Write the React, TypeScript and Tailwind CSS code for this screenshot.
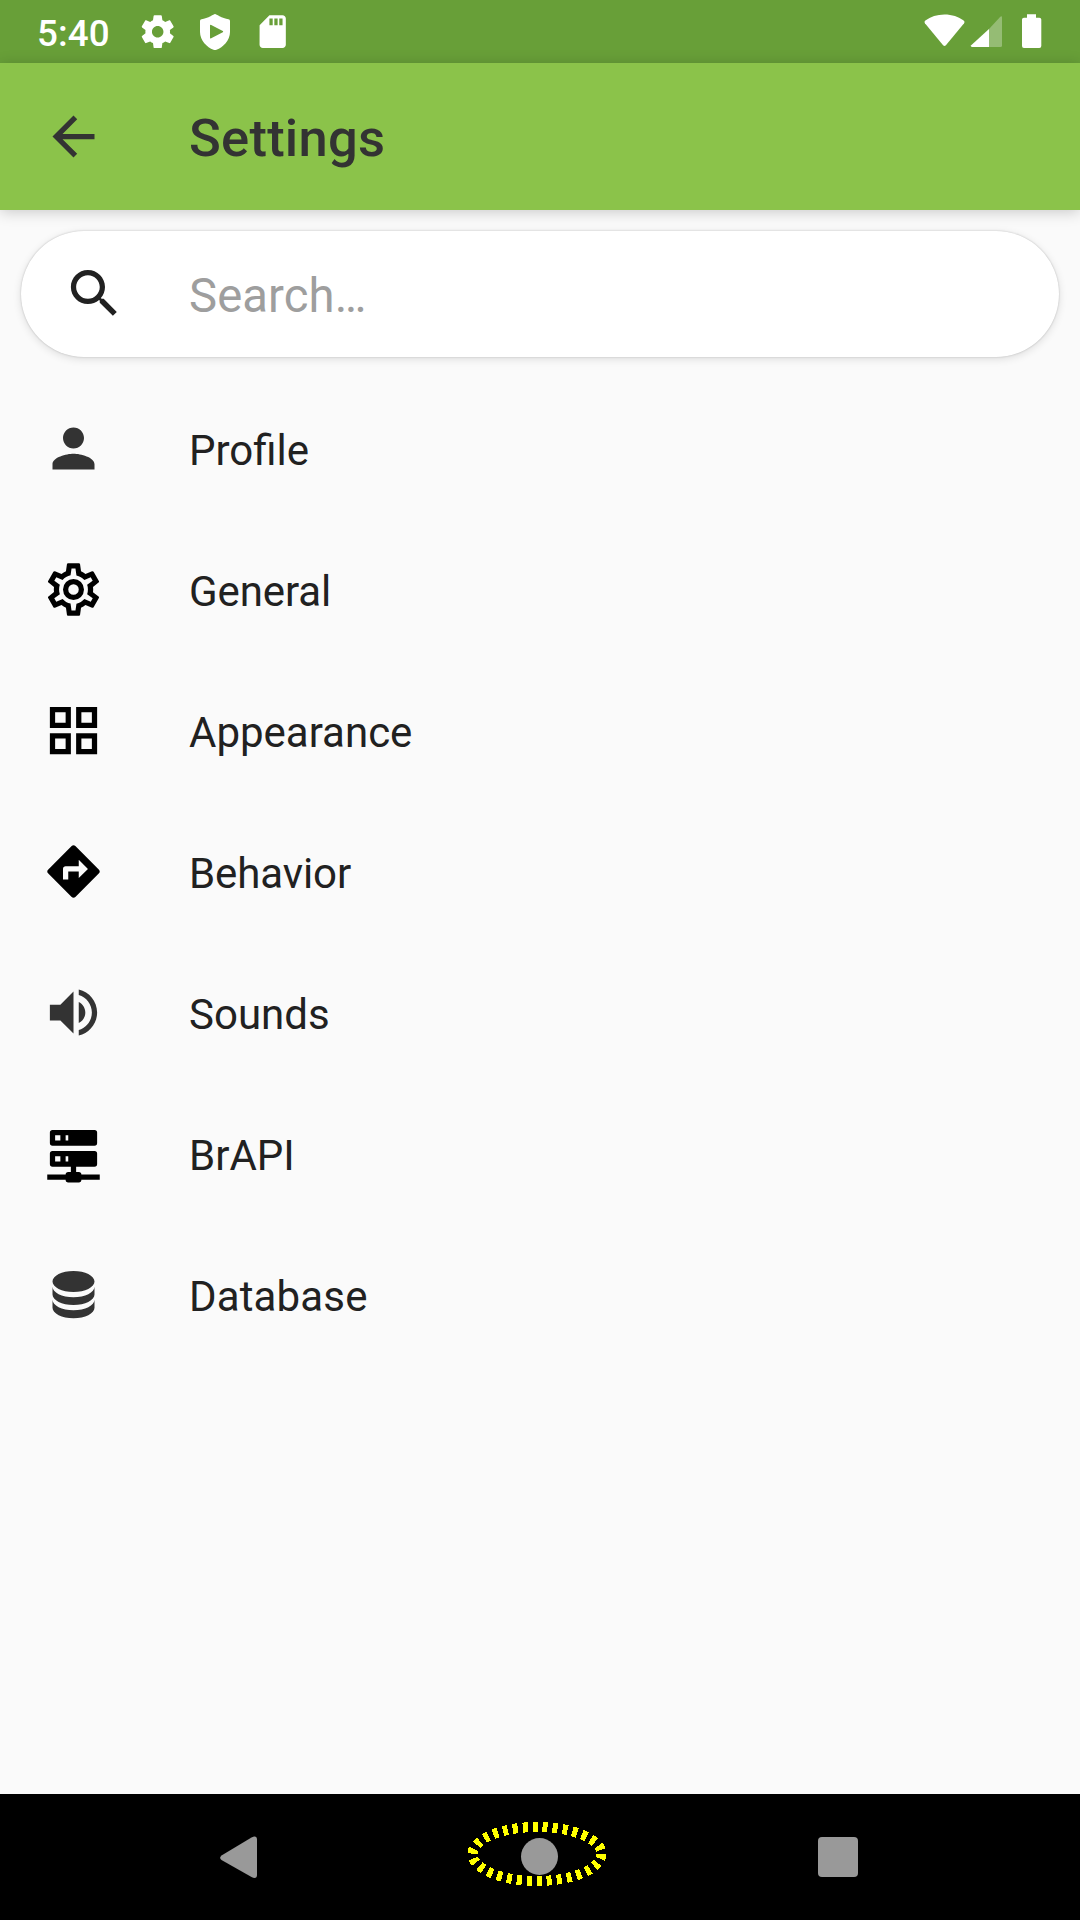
import React from "react";

type IconProps = { d: string; className?: string };

function Icon({ d, className }: IconProps) {
  return (
    <svg viewBox="0 0 24 24" fill="currentColor" fillRule="evenodd" className={className}>
      <path d={d} />
    </svg>
  );
}

const paths = {
  back: "M20 11H7.83l5.59-5.59L12 4l-8 8 8 8 1.41-1.41L7.83 13H20v-2z",
  search:
    "M15.5 14h-.79l-.28-.27C15.41 12.59 16 11.11 16 9.5 16 5.91 13.09 3 9.5 3S3 5.91 3 9.5 5.91 16 9.5 16c1.61 0 3.09-.59 4.23-1.57l.27.28v.79l5 4.99L20.49 19l-4.99-5zm-6 0C7.01 14 5 11.99 5 9.5S7.01 5 9.5 5 14 7.01 14 9.5 11.99 14 9.5 14z",
  person:
    "M12 12c2.21 0 4-1.79 4-4s-1.79-4-4-4-4 1.79-4 4 1.79 4 4 4zm0 2c-2.67 0-8 1.34-8 4v2h16v-2c0-2.66-5.33-4-8-4z",
  cogOutline:
    "M12,8A4,4 0 0,1 16,12A4,4 0 0,1 12,16A4,4 0 0,1 8,12A4,4 0 0,1 12,8M12,10A2,2 0 0,0 10,12A2,2 0 0,0 12,14A2,2 0 0,0 14,12A2,2 0 0,0 12,10M10,22C9.75,22 9.54,21.82 9.5,21.58L9.13,18.93C8.5,18.68 7.96,18.34 7.44,17.94L4.95,18.95C4.73,19.03 4.46,18.95 4.34,18.73L2.34,15.27C2.21,15.05 2.27,14.78 2.46,14.63L4.57,12.97L4.5,12L4.57,11L2.46,9.37C2.27,9.22 2.21,8.95 2.34,8.73L4.34,5.27C4.46,5.05 4.73,4.96 4.95,5.05L7.44,6.05C7.96,5.66 8.5,5.32 9.13,5.07L9.5,2.42C9.54,2.18 9.75,2 10,2H14C14.25,2 14.46,2.18 14.5,2.42L14.87,5.07C15.5,5.32 16.04,5.66 16.56,6.05L19.05,5.05C19.27,4.96 19.54,5.05 19.66,5.27L21.66,8.73C21.79,8.95 21.73,9.22 21.54,9.37L19.43,11L19.5,12L19.43,13L21.54,14.63C21.73,14.78 21.79,15.05 21.66,15.27L19.66,18.73C19.54,18.95 19.27,19.04 19.05,18.95L16.56,17.95C16.04,18.34 15.5,18.68 14.87,18.93L14.5,21.58C14.46,21.82 14.25,22 14,22H10M11.25,4L10.88,6.61C9.68,6.86 8.62,7.5 7.85,8.39L5.44,7.35L4.69,8.65L6.8,10.2C6.4,11.37 6.4,12.64 6.8,13.8L4.68,15.36L5.43,16.66L7.86,15.62C8.63,16.5 9.68,17.14 10.87,17.38L11.24,20H12.76L13.13,17.39C14.32,17.14 15.37,16.5 16.14,15.62L18.57,16.66L19.32,15.36L17.2,13.81C17.6,12.64 17.6,11.37 17.2,10.2L19.31,8.65L18.56,7.35L16.15,8.39C15.38,7.5 14.32,6.86 13.12,6.62L12.75,4H11.25Z",
  grid: "M3 3h8v8H3zM5 5v4h4V5zM13 3h8v8h-8zM15 5v4h4V5zM3 13h8v8H3zM5 15v4h4v-4zM13 13h8v8h-8zM15 15v4h4v-4z",
  directions:
    "M21.71 11.29l-9-9c-.39-.39-1.02-.39-1.41 0l-9 9c-.39.39-.39 1.02 0 1.41l9 9c.39.39 1.02.39 1.41 0l9-9c.39-.38.39-1.01 0-1.41zM14 14.5V12h-4v3H8v-4c0-.55.45-1 1-1h5V7.5l3.5 3.5-3.5 3.5z",
  volume:
    "M3 9v6h4l5 5V4L7 9H3zM16.5 12c0-1.77-1.02-3.29-2.5-4.03v8.05c1.48-.73 2.5-2.25 2.5-4.02zM14 3.23v2.06c2.89.86 5 3.54 5 6.71s-2.11 5.85-5 6.71v2.06c4.01-.91 7-4.49 7-8.77s-2.99-7.86-7-8.77z",
  server:
    "M13,19H14A1,1 0 0,1 15,20H22V22H15A1,1 0 0,1 14,23H10A1,1 0 0,1 9,22H2V20H9A1,1 0 0,1 10,19H11V17H4A1,1 0 0,1 3,16V12A1,1 0 0,1 4,11H20A1,1 0 0,1 21,12V16A1,1 0 0,1 20,17H13V19M4,3H20A1,1 0 0,1 21,4V8A1,1 0 0,1 20,9H4A1,1 0 0,1 3,8V4A1,1 0 0,1 4,3M9,7H10V5H9V7M9,15H10V13H9V15M5,5V7H7V5H5M5,13V15H7V13H5Z",
  database:
    "M12,3C7.58,3 4,4.79 4,7C4,9.21 7.58,11 12,11C16.42,11 20,9.21 20,7C20,4.79 16.42,3 12,3M4,9V12C4,14.21 7.58,16 12,16C16.42,16 20,14.21 20,12V9C20,11.21 16.42,13 12,13C7.58,13 4,11.21 4,9M4,14V17C4,19.21 7.58,21 12,21C16.42,21 20,19.21 20,17V14C20,16.21 16.42,18 12,18C7.58,18 4,16.21 4,14Z",
  settings:
    "M19.43 12.98c.04-.32.07-.64.07-.98s-.03-.66-.07-.98l2.11-1.65c.19-.15.24-.42.12-.64l-2-3.46c-.12-.22-.39-.3-.61-.22l-2.49 1c-.52-.4-1.08-.73-1.69-.98l-.38-2.65C14.46 2.18 14.25 2 14 2h-4c-.25 0-.46.18-.49.42l-.38 2.65c-.61.25-1.17.59-1.69.98l-2.49-1c-.23-.09-.49 0-.61.22l-2 3.46c-.13.22-.07.49.12.64l2.11 1.65c-.04.32-.07.65-.07.98s.03.66.07.98l-2.11 1.65c-.19.15-.24.42-.12.64l2 3.46c.12.22.39.3.61.22l2.49-1c.52.4 1.08.73 1.69.98l.38 2.65c.03.24.24.42.49.42h4c.25 0 .46-.18.49-.42l.38-2.65c.61-.25 1.17-.59 1.69-.98l2.49 1c.23.09.49 0 .61-.22l2-3.46c.12-.22.07-.49-.12-.64l-2.11-1.65zM12 15.5c-1.93 0-3.5-1.57-3.5-3.5s1.57-3.5 3.5-3.5 3.5 1.57 3.5 3.5-1.57 3.5-3.5 3.5z",
  sdCard:
    "M18 2h-8L4.02 8 4 20c0 1.1.9 2 2 2h12c1.1 0 2-.9 2-2V4c0-1.1-.9-2-2-2zm-6 6h-2V4h2v4zm3 0h-2V4h2v4zm3 0h-2V4h2v4z",
};

const items = [
  { label: "Profile", d: paths.person, color: "text-[#333333]", tracking: "tracking-normal" },
  { label: "General", d: paths.cogOutline, color: "text-black", tracking: "tracking-[-0.1px]" },
  { label: "Appearance", d: paths.grid, color: "text-black", tracking: "tracking-normal" },
  { label: "Behavior", d: paths.directions, color: "text-black", tracking: "tracking-[-0.1px]" },
  { label: "Sounds", d: paths.volume, color: "text-[#333333]", tracking: "tracking-normal" },
  { label: "BrAPI", d: paths.server, color: "text-black", tracking: "tracking-normal" },
  { label: "Database", d: paths.database, color: "text-[#333333]", tracking: "tracking-[0.15px]" },
];

function StatusBar() {
  return (
    <div className="flex h-[63px] shrink-0 items-center bg-[#689f38] pl-[37px] pr-[32px] text-white">
      <span className="w-[100.5px] pt-[5px] text-[36.75px] leading-none font-medium tracking-[0.1px]">5:40</span>
      <Icon d={paths.settings} className="size-[39.4px]" />
      <svg viewBox="0 0 32 38" className="ml-[22px] h-[38px] w-[32px]" fill="currentColor" fillRule="evenodd">
        <path d="M16 1C17 1 18 2 20.500 3.200C23 4.500 26.500 5.800 29.500 6.300Q31 6.600 31 8V19C31 27.500 24 34.500 17.500 36.700Q16 37.200 14.500 36.700C8 34.500 1 27.500 1 19V8Q1 6.600 2.500 6.300C5.500 5.800 9 4.500 11.500 3.200C14 2 15 1 16 1ZM11 12.500V24.500Q11 25.800 12.200 25.200L23.800 19.300Q24.700 18.700 23.800 18.100L12.200 11.900Q11 11.300 11 12.500Z" />
      </svg>
      <Icon d={paths.sdCard} className="ml-[22.3px] size-[39.4px]" />
      <svg viewBox="0 0 124 40" className="ml-auto h-[40px] w-[124px]" fill="currentColor">
        <path d="M.9 11.200Q-.1 9.800 1.400 8.500C6.500 4.700 13 2.500 20.500 2.500S34.500 4.700 39.600 8.500Q41.100 9.800 40.100 11.200L21.900 33.300Q20.500 34.800 19.100 33.300Z" />
        <path d="M65 17V35H47.800Q46.200 34.500 47.200 33.200Z" />
        <path d="M65 17 76.300 4.700Q78 3.500 78 5.300V33.500Q78 35 76.500 35H65Z" className="opacity-30" />
        <path d="M103 2.300H112V5.800H115.300Q117.300 5.800 117.300 7.500V34Q117.300 36 115.300 36H100Q98 36 98 34V7.500Q98 5.800 100 5.800H103Z" />
      </svg>
    </div>
  );
}

function NavBar() {
  return (
    <div className="flex h-[126px] shrink-0 items-center bg-black pb-px pl-[219px] text-[#999999]">
      <svg viewBox="0 0 39 44" className="h-[44px] w-[39px]" fill="currentColor">
        <path d="M2.500 20.500 32.500 2.400C36 .6 38 1.500 38 4.500V40C38 43 36 43.900 32.500 42.100L2.500 25.100Q-.2 22.800 2.500 20.500Z" />
      </svg>
      <div className="relative ml-[263px] size-[37px] rounded-full bg-[#999999]">
        <svg
          viewBox="0 0 142 68"
          className="absolute -top-[18px] -left-[55.5px] h-[68px] w-[142px] max-w-none"
          fill="none"
          shapeRendering="crispEdges"
        >
          <ellipse cx="71" cy="34" rx="64.5" ry="27" stroke="#ffff00" strokeWidth="10" strokeDasharray="5 5" />
        </svg>
      </div>
      <div className="ml-[260px] size-[40px] rounded-[4px] bg-[#999999]" />
    </div>
  );
}

export default function App() {
  return (
    <div className="flex h-[1920px] w-[1080px] flex-col overflow-hidden bg-[#fafafa] font-[Roboto,sans-serif] text-[#212121]">
      <StatusBar />
      <header className="flex h-[147px] shrink-0 items-center bg-[#8bc34a] pl-[42px] text-[#333333] shadow-[0_2px_14px_rgba(0,0,0,0.2)]">
        <Icon d={paths.back} className="size-[63px]" />
        <h1 className="ml-[84px] pt-[4px] text-[52.5px] leading-none font-medium tracking-[0.25px]">Settings</h1>
      </header>
      <main className="flex-1">
        <div className="mx-[21px] mt-[21px] mb-[21px] flex h-[126px] items-center rounded-full bg-white pl-[42px] shadow-[0_0_2px_rgba(0,0,0,0.22),0_2px_8px_rgba(0,0,0,0.12)]">
          <Icon d={paths.search} className="mb-[2px] size-[63px]" />
          <span className="ml-[63px] pt-[5px] text-[47.25px] leading-none tracking-[0.1px] text-[#9e9e9e]">Search…</span>
        </div>
        <ul>
          {items.map((item) => (
            <li key={item.label} className="flex h-[141px] items-center pl-[42px]">
              <Icon d={item.d} className={"size-[63px] " + item.color} />
              <span className={"ml-[84px] pt-[5px] text-[42px] leading-none " + item.tracking}>{item.label}</span>
            </li>
          ))}
        </ul>
      </main>
      <NavBar />
    </div>
  );
}
